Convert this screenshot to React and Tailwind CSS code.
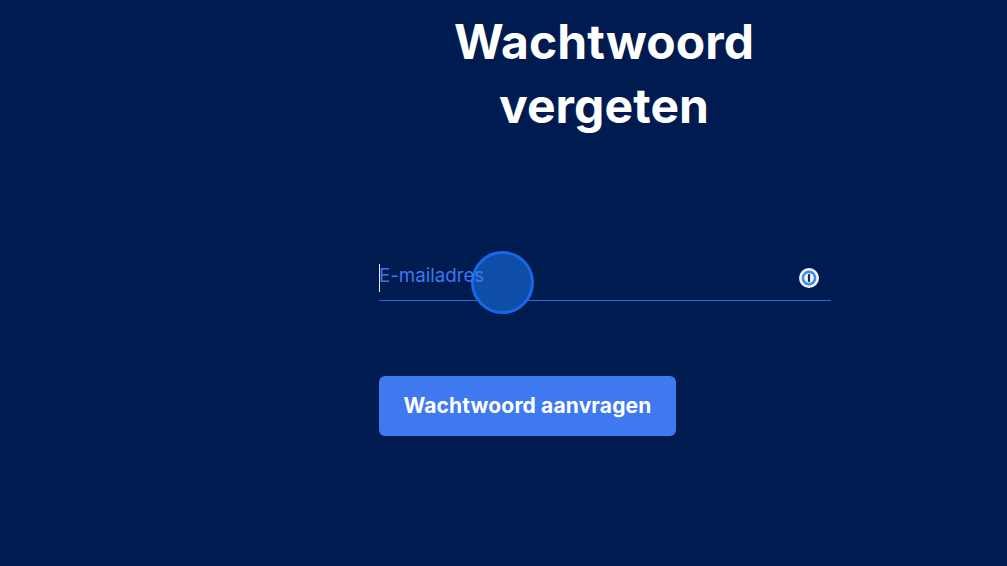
export default function App() {
  return (
    <div className="h-[566px] w-full overflow-hidden bg-[#001b50] flex justify-center pl-[203px] font-['Inter',sans-serif]">
      <div className="w-[452px] flex flex-col items-stretch">
        <h1 className="mt-[10px] pr-[2px] text-center text-[48px] leading-[64px] font-bold text-white tracking-[0.1px]">
          Wachtwoord<br />vergeten
        </h1>
        <div className="relative mt-[126px] h-[37px] border-b border-[#2f68d8] flex items-center justify-between">
          <div className="absolute left-[92px] top-[-13px] w-[63px] h-[63px] rounded-full bg-[#0f4ea8] border-[3px] border-[#1668e6]"></div>
          <div className="flex items-center h-[28px] -mt-[9px] relative">
            <span className="w-px h-[28px] bg-white/90"></span>
            <span className="text-[#3f78ef] text-[18.7px] font-normal -ml-px -mt-[2px]">E-mailadres</span>
          </div>
          <svg className="mr-[12px] -mt-[8px] relative" width="20" height="20" viewBox="0 0 20 20">
            <circle cx="10" cy="10" r="10" fill="#f2f6fc" />
            <circle cx="10" cy="10" r="7.4" fill="#3b8fe8" />
            <circle cx="10" cy="10" r="4.8" fill="#f2f6fc" />
            <rect x="8.9" y="6" width="2.2" height="8" rx="1" fill="#0d2a5e" />
          </svg>
        </div>
        <button className="mt-[75px] w-[297px] h-[60px] rounded-[6px] bg-[#3e79f0] text-white text-[21px] font-bold tracking-[0.15px]">
          Wachtwoord aanvragen
        </button>
      </div>
    </div>
  );
}
